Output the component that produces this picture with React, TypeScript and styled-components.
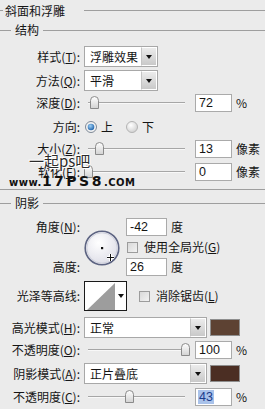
import React from 'react';
import styled, { createGlobalStyle } from 'styled-components';

const GlobalStyle = createGlobalStyle`
  html, body { margin: 0; padding: 0; background: #ebebeb; }
  body {
    font-family: "Noto Sans CJK SC", "Noto Sans", sans-serif;
    font-size: 12px;
    color: #151515;
  }
`;

const Panel = styled.div`
  position: relative;
  width: 265px;
  height: 409px;
  overflow: hidden;
  background: #ebebeb;
`;

const TitleRow = styled.div<{ $h: number; $top?: number }>`
  display: flex;
  align-items: center;
  height: ${p => p.$h}px;
  margin-top: ${p => p.$top ?? 0}px;
  line-height: 16px;
`;

const Rule = styled.span<{ $w?: number; $ml?: number; $mr?: number }>`
  height: 1px;
  background: #9e9e9e;
  margin-left: ${p => p.$ml ?? 0}px;
  margin-right: ${p => p.$mr ?? 0}px;
  ${p => (p.$w ? `width: ${p.$w}px; flex: none;` : 'flex: 1;')}
`;

const Divider = styled.div<{ $top: number }>`
  height: 1px;
  margin-top: ${p => p.$top}px;
  background: #9e9e9e;
`;

const Row = styled.div<{ $top: number; $h: number }>`
  display: flex;
  align-items: center;
  height: ${p => p.$h}px;
  margin-top: ${p => p.$top}px;
`;

const Label = styled.label`
  flex: none;
  width: 80px;
  margin-right: 4px;
  text-align: right;
  white-space: nowrap;
  line-height: 16px;
`;

const Select = styled.div<{ $w: number }>`
  flex: none;
  display: flex;
  width: ${p => p.$w}px;
  height: 21px;
  box-sizing: border-box;
  border: 1px solid #a8a8a8;
  background: #fff;
`;

const SelectText = styled.span`
  flex: 1;
  padding-left: 5px;
  line-height: 19px;
  white-space: nowrap;
  overflow: hidden;
`;

const DropBtn = styled.span`
  flex: none;
  width: 14px;
  display: flex;
  align-items: center;
  justify-content: center;
  border: 1px solid #fff;
  border-left-color: #c4c4c4;
  background: linear-gradient(#ececec, #c9c9c9);
  &::after {
    content: '';
    border-left: 3.5px solid transparent;
    border-right: 3.5px solid transparent;
    border-top: 4px solid #111;
  }
`;

const NumBox = styled.div<{ $w: number; $ml?: number }>`
  flex: none;
  width: ${p => p.$w}px;
  height: 18px;
  margin-left: ${p => p.$ml ?? 0}px;
  box-sizing: border-box;
  border: 1px solid #aaaaaa;
  background: #fff;
  padding-left: 3px;
  font-family: "Liberation Sans", Arial, sans-serif;
  font-size: 12.5px;
  line-height: 16px;
`;

const Selected = styled.span`
  background: #a9c2ea;
  color: #1c3d8a;
  padding: 0 1px;
  margin-left: -1px;
`;

const Unit = styled.span<{ $ml?: number }>`
  margin-left: ${p => p.$ml ?? 4}px;
  line-height: 16px;
`;

const Track = styled.div`
  position: relative;
  flex: none;
  width: 106px;
  height: 18px;
  margin-right: 5px;
  &::before {
    content: '';
    position: absolute;
    left: 4px;
    right: 5px;
    top: 8px;
    height: 1px;
    background: #a6a6a6;
    box-shadow: 0 1px 0 #f8f8f8;
  }
`;

const ThumbMark = styled.svg`
  position: absolute;
  top: 2px;
`;

const Slider: React.FC<{ value: number }> = ({ value }) => (
  <Track>
    <ThumbMark width="9" height="13" viewBox="0 0 9 13" style={{ left: 4 + value * 97 - 4.5 }}>
      <defs>
        <linearGradient id="thumbFill" x1="0" y1="0" x2="0" y2="1">
          <stop offset="0" stopColor="#ffffff" />
          <stop offset="1" stopColor="#d2d2d2" />
        </linearGradient>
      </defs>
      <path d="M0.5 12.5 V4.5 A4 4 0 0 1 8.5 4.5 V12.5 Z" fill="url(#thumbFill)" stroke="#8a8a8a" />
    </ThumbMark>
  </Track>
);

const RadioGroup = styled.div`
  display: flex;
  align-items: center;
  margin-left: 1px;
`;

const RadioItem = styled.span<{ $ml?: number }>`
  display: flex;
  align-items: center;
  gap: 4px;
  margin-left: ${p => p.$ml ?? 0}px;
  line-height: 16px;
`;

const Radio: React.FC<{ on?: boolean }> = ({ on }) => (
  <svg width="12" height="12" viewBox="0 0 12 12">
    <defs>
      <radialGradient id={on ? 'radOn' : 'radOff'} cx="0.4" cy="0.35" r="0.7">
        <stop offset="0" stopColor={on ? '#9fd0f5' : '#ffffff'} />
        <stop offset="1" stopColor={on ? '#1a5fa8' : '#cfcfcf'} />
      </radialGradient>
    </defs>
    <circle cx="6" cy="6" r="5.5" fill={on ? '#f2f2f2' : 'url(#radOff)'} stroke={on ? '#7d8896' : '#b4b4b4'} />
    {on ? <circle cx="6" cy="6" r="3.3" fill="url(#radOn)" /> : null}
  </svg>
);

const CheckBox = styled.span<{ $ml?: number }>`
  flex: none;
  width: 11px;
  height: 11px;
  box-sizing: border-box;
  margin-left: ${p => p.$ml ?? 0}px;
  margin-right: 6px;
  border: 1px solid #9c9c9c;
  background: linear-gradient(135deg, #d9d9d9, #f2f2f2);
`;

const CheckText = styled.span`
  line-height: 16px;
  white-space: nowrap;
`;

const AngleGrid = styled.div`
  display: grid;
  grid-template-columns: 80px 36px auto;
  grid-template-rows: 18px 18px 18px;
  column-gap: 4px;
  row-gap: 2px;
  margin-top: 6px;
`;

const GridLabel = styled(Label)<{ $row: number }>`
  grid-column: 1;
  grid-row: ${p => p.$row};
  align-self: center;
  margin-right: 0;
`;

const GridCell = styled.div<{ $row: number }>`
  grid-column: 3;
  grid-row: ${p => p.$row};
  display: flex;
  align-items: center;
  padding-left: 2px;
`;

const DialCell = styled.div`
  grid-column: 2;
  grid-row: 1 / 4;
  align-self: center;
  height: 36px;
  margin-top: 1px;
`;

const Dial: React.FC = () => (
  <svg width="36" height="36" viewBox="0 0 36 36">
    <defs>
      <radialGradient id="dialFill" cx="0.4" cy="0.35" r="0.7">
        <stop offset="0" stopColor="#ffffff" />
        <stop offset="1" stopColor="#dcdce6" />
      </radialGradient>
    </defs>
    <circle cx="18" cy="18" r="16.8" fill="url(#dialFill)" stroke="#5d6482" strokeWidth="1.6" />
    <circle cx="18" cy="18" r="15.2" fill="none" stroke="#c9cbd8" strokeWidth="0.8" />
    <rect x="17" y="17" width="2.2" height="2.2" fill="#111" />
    <g stroke="#fff" strokeWidth="3">
      <line x1="26.5" y1="24" x2="26.5" y2="31" />
      <line x1="23" y1="27.5" x2="30" y2="27.5" />
    </g>
    <g stroke="#111" strokeWidth="1">
      <line x1="26.5" y1="24" x2="26.5" y2="31" />
      <line x1="23" y1="27.5" x2="30" y2="27.5" />
    </g>
  </svg>
);

const ContourBox = styled.div`
  flex: none;
  display: flex;
  width: 43px;
  height: 30px;
  box-sizing: border-box;
  border: 1px solid #1a1a1a;
  background: #fff;
`;

const ContourArrow = styled.span`
  flex: 1;
  display: flex;
  align-items: center;
  justify-content: center;
  &::after {
    content: '';
    border-left: 3px solid transparent;
    border-right: 3px solid transparent;
    border-top: 4px solid #111;
  }
`;

const Swatch = styled.span<{ $color: string }>`
  flex: none;
  width: 30px;
  height: 17px;
  margin-left: 3px;
  box-sizing: border-box;
  border: 1px solid #8e8e8e;
  background: ${p => p.$color};
`;

const Watermark = styled.div`
  position: absolute;
  left: 29px;
  top: 152px;
  font-size: 15px;
  line-height: 18px;
  color: #2b2b2b;
  text-shadow: 0 0 1px #fff, 1px 1px 0 #fff, -1px -1px 0 #fff;
`;

const SiteMark = styled.div`
  position: absolute;
  left: 9px;
  top: 175px;
  display: flex;
  align-items: baseline;
  font-family: "DejaVu Sans", sans-serif;
  font-weight: bold;
  color: #111;
  line-height: 13px;
`;

const SitePart = styled.span<{ $size: number; $ls: number }>`
  font-size: ${p => p.$size}px;
  letter-spacing: ${p => p.$ls}px;
`;

export default function App() {
  return (
    <Panel>
      <GlobalStyle />
      <TitleRow $h={21}>
        <Rule $w={3} $mr={2} />
        斜面和浮雕
        <Rule $ml={19} />
      </TitleRow>
      <TitleRow $h={18}>
        <Rule $w={11} $mr={4} />
        结构
        <Rule $ml={4} />
      </TitleRow>

      <Row $top={7} $h={21}>
        <Label>样式(<u>T</u>):</Label>
        <Select $w={74}><SelectText>浮雕效果</SelectText><DropBtn /></Select>
      </Row>
      <Row $top={3} $h={21}>
        <Label>方法(<u>Q</u>):</Label>
        <Select $w={74}><SelectText>平滑</SelectText><DropBtn /></Select>
      </Row>
      <Row $top={3} $h={18}>
        <Label>深度(<u>D</u>):</Label>
        <Slider value={0.072} />
        <NumBox $w={37}>72</NumBox>
        <Unit>%</Unit>
      </Row>
      <Row $top={7} $h={16}>
        <Label>方向:</Label>
        <RadioGroup>
          <RadioItem><Radio on />上</RadioItem>
          <RadioItem $ml={13}><Radio />下</RadioItem>
        </RadioGroup>
      </Row>
      <Row $top={5} $h={18}>
        <Label>大小(<u>Z</u>):</Label>
        <Slider value={0.118} />
        <NumBox $w={37}>13</NumBox>
        <Unit>像素</Unit>
      </Row>
      <Row $top={5} $h={18}>
        <Label>软化(<u>F</u>):</Label>
        <Slider value={0} />
        <NumBox $w={37}>0</NumBox>
        <Unit>像素</Unit>
      </Row>
      <Divider $top={8} />

      <TitleRow $h={18} $top={4}>
        <Rule $w={11} $mr={4} />
        阴影
        <Rule $ml={4} />
      </TitleRow>

      <AngleGrid>
        <GridLabel $row={1}>角度(<u>N</u>):</GridLabel>
        <DialCell><Dial /></DialCell>
        <GridCell $row={1}>
          <NumBox $w={41}>-42</NumBox>
          <Unit>度</Unit>
        </GridCell>
        <GridCell $row={2}>
          <CheckBox $ml={1} />
          <CheckText>使用全局光(<u>G</u>)</CheckText>
        </GridCell>
        <GridLabel $row={3}>高度:</GridLabel>
        <GridCell $row={3}>
          <NumBox $w={41}>26</NumBox>
          <Unit>度</Unit>
        </GridCell>
      </AngleGrid>

      <Row $top={5} $h={30}>
        <Label>光泽等高线:</Label>
        <ContourBox>
          <svg width="30" height="28" viewBox="0 0 30 28">
            <polygon points="2,28 30,1 30,28" fill="#9d9d9d" />
          </svg>
          <ContourArrow />
        </ContourBox>
        <CheckBox $ml={12} />
        <CheckText>消除锯齿(<u>L</u>)</CheckText>
      </Row>

      <Row $top={6} $h={21}>
        <Label>高光模式(<u>H</u>):</Label>
        <Select $w={123}><SelectText>正常</SelectText><DropBtn /></Select>
        <Swatch $color="#5d4233" />
      </Row>
      <Row $top={3} $h={18}>
        <Label>不透明度(<u>O</u>):</Label>
        <Slider value={1} />
        <NumBox $w={37}>100</NumBox>
        <Unit>%</Unit>
      </Row>
      <Row $top={4} $h={21}>
        <Label>阴影模式(<u>A</u>):</Label>
        <Select $w={123}><SelectText>正片叠底</SelectText><DropBtn /></Select>
        <Swatch $color="#4b2e23" />
      </Row>
      <Row $top={4} $h={18}>
        <Label>不透明度(<u>C</u>):</Label>
        <Slider value={0.43} />
        <NumBox $w={37}><Selected>43</Selected></NumBox>
        <Unit>%</Unit>
      </Row>

      <Watermark>一起ps吧</Watermark>
      <SiteMark>
        <SitePart $size={10} $ls={0.5}>www.</SitePart>
        <SitePart $size={14} $ls={2.5}>17PS8</SitePart>
        <SitePart $size={10} $ls={0.5}>.COM</SitePart>
      </SiteMark>
    </Panel>
  );
}
